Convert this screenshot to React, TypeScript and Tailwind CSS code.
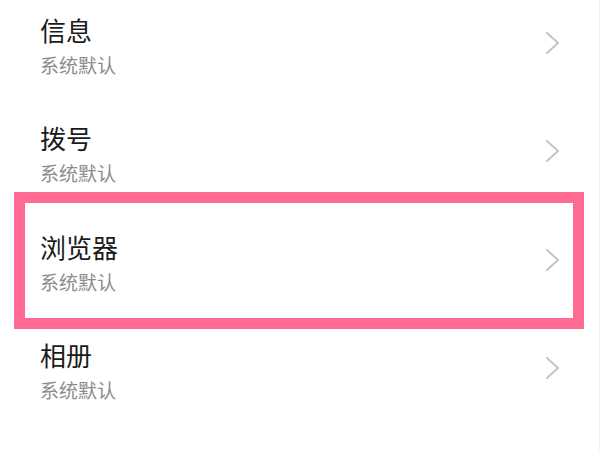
const rows = [
  { title: "信息", sub: "系统默认" },
  { title: "拨号", sub: "系统默认" },
  { title: "浏览器", sub: "系统默认" },
  { title: "相册", sub: "系统默认" },
]

function Chevron() {
  return (
    <svg width="16" height="24" viewBox="0 0 16 24" className="mt-[31px] mr-[38px] shrink-0">
      <polyline
        points="2,2 13,12 2,22"
        fill="none"
        stroke="#c4c4c4"
        strokeWidth="2"
        strokeLinecap="round"
        strokeLinejoin="round"
      />
    </svg>
  )
}

export default function App() {
  return (
    <div
      className="relative h-[450px] w-[600px] overflow-hidden border-r border-[#efefef] bg-white"
      style={{ fontFamily: '"Noto Sans CJK SC", "Noto Sans", sans-serif' }}
    >
      <div className="flex flex-col">
        {rows.map((row) => (
          <div key={row.title} className="flex h-[108.4px] shrink-0 items-start justify-between">
            <div className="pl-[40px] pt-[15px]">
              <div className="text-[26px] leading-[30px] text-[#1b1b1b]">{row.title}</div>
              <div className="mt-[8px] text-[19px] leading-[24px] text-[#8c8c8c]">{row.sub}</div>
            </div>
            <Chevron />
          </div>
        ))}
      </div>

      {/* highlight frame around the browser row */}
      <div className="absolute left-[14px] top-[192px] h-[137px] w-[570px] border-[11px] border-[#fe6a92]" />
    </div>
  )
}
